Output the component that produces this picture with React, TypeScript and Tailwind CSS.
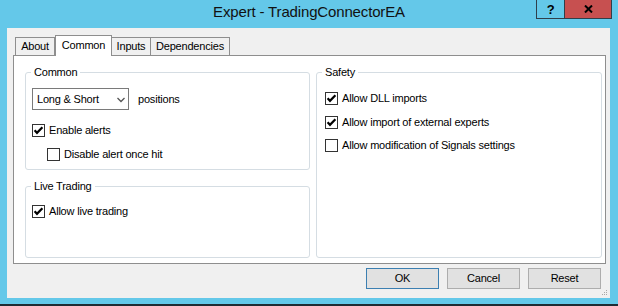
import React from "react";

const CheckBox = ({ checked }: { checked?: boolean }) => (
  <svg width="13" height="13" viewBox="0 0 13 13" className="shrink-0">
    <rect x="0.5" y="0.5" width="12" height="12" fill="#fff" stroke="#333" />
    {checked && (
      <path d="M2.6 6.2 L5 8.8 L10.4 3.2" fill="none" stroke="#000" strokeWidth="2.2" />
    )}
  </svg>
);

const CheckRow = ({ label, checked, className = "" }: { label: string; checked?: boolean; className?: string }) => (
  <div className={`flex items-center gap-[4px] h-[13px] leading-[13px] ${className}`}>
    <CheckBox checked={checked} />
    <span>{label}</span>
  </div>
);

const GroupBox = ({ title, className = "", children }: { title: string; className?: string; children?: React.ReactNode }) => (
  <div className={`relative border border-[#d5dde3] rounded-[3px] ${className}`}>
    <span className="absolute -top-[7px] left-[5px] px-[3px] bg-white leading-[13px]">{title}</span>
    {children}
  </div>
);

const Button = ({ label, primary }: { label: string; primary?: boolean }) => (
  <div
    className={`w-[73px] h-[21px] flex items-center justify-center bg-[#e1e1e1] border ${
      primary ? "border-[#3c7fb1]" : "border-[#adadad]"
    }`}
  >
    {label}
  </div>
);

const tabs = [
  { name: "About", w: "w-[40px]" },
  { name: "Common", w: "w-[57px]", active: true },
  { name: "Inputs", w: "w-[40px]" },
  { name: "Dependencies", w: "w-[80px]" },
];

export default function App() {
  return (
    <div className="relative w-[618px] h-[306px] bg-[#64c8e9] flex flex-col font-['Liberation_Sans',Arial,sans-serif] text-[11px] tracking-[-0.2px] text-black overflow-hidden">
      {/* title bar */}
      <div className="h-[28px] shrink-0">
        <div className="h-[24px] leading-[24px] text-center text-[15px] tracking-[-0.15px] text-[#111]">
          Expert - TradingConnectorEA
        </div>
      </div>
      <div className="absolute top-0 right-[6px] flex h-[19px] border border-t-0 border-[#2f3f4b]">
        <div className="w-[27px] flex items-center justify-center font-bold text-[13px] leading-none">?</div>
        <div className="w-[47px] bg-[#c75050] border-l border-[#2f3f4b] flex items-center justify-center">
          <svg width="9" height="8" viewBox="0 0 9 8">
            <path d="M1 0.5 L8 7.5 M8 0.5 L1 7.5" stroke="#000" strokeWidth="2" />
          </svg>
        </div>
      </div>

      {/* client area */}
      <div className="relative ml-[7px] mr-[8px] h-[270px] shrink-0 bg-[#f0f0f0] flex flex-col">
        <div className="pt-[7px] pl-[6px]">
          <div className="flex items-end h-[20px] pl-[2px]">
            {tabs.map((t) =>
              t.active ? (
                <div
                  key={t.name}
                  className={`${t.w} h-[21px] -mb-px relative z-10 bg-white border border-b-0 border-[#8e8e8e] flex items-start justify-center pt-[3px] leading-[13px]`}
                >
                  {t.name}
                </div>
              ) : (
                <div
                  key={t.name}
                  className={`${t.w} h-[18px] bg-[#f0f0f0] border border-b-0 border-[#8e8e8e] -ml-px first:ml-0 flex items-center justify-center leading-[13px]`}
                >
                  {t.name}
                </div>
              )
            )}
          </div>
          <div className="w-[593px] h-[209px] bg-white border border-[#8e8e8e] pl-[11px] pr-[3px] pt-[16px] flex gap-[6px]">
            <div className="w-[285px] flex flex-col gap-[16px]">
              <GroupBox title="Common" className="h-[98px] pl-[6px] pt-[15px]">
                <div className="flex items-center">
                  <div className="w-[97px] h-[22px] border border-[#7a7a7a] bg-white flex items-center justify-between pl-[4px] pr-[3px]">
                    <span>Long &amp; Short</span>
                    <svg width="8" height="6" viewBox="0 0 8 6" className="mt-[2px]">
                      <path d="M0.5 1 L4 4.5 L7.5 1" fill="none" stroke="#555" strokeWidth="1.3" />
                    </svg>
                  </div>
                  <span className="ml-[9px]">positions</span>
                </div>
                <CheckRow label="Enable alerts" checked className="mt-[14px]" />
                <CheckRow label="Disable alert once hit" className="mt-[11px] ml-[15px]" />
              </GroupBox>
              <GroupBox title="Live Trading" className="h-[72px] pl-[6px] pt-[18px]">
                <CheckRow label="Allow live trading" checked />
              </GroupBox>
            </div>
            <GroupBox title="Safety" className="w-[286px] h-[186px] pl-[8px] pt-[19px]">
              <CheckRow label="Allow DLL imports" checked />
              <CheckRow label="Allow import of external experts" checked className="mt-[11px]" />
              <CheckRow label="Allow modification of Signals settings" className="mt-[10px]" />
            </GroupBox>
          </div>
        </div>

        <div className="mt-[4px] pr-[9px] flex justify-end gap-[8px]">
          <Button label="OK" primary />
          <Button label="Cancel" />
          <Button label="Reset" />
        </div>

        <svg width="6" height="6" viewBox="0 0 6 6" className="absolute right-[3px] bottom-[3px]">
          <rect x="5" y="1" width="1" height="1" fill="#a8a8a8" />
          <rect x="3" y="3" width="1" height="1" fill="#a8a8a8" />
          <rect x="5" y="3" width="1" height="1" fill="#a8a8a8" />
          <rect x="1" y="5" width="1" height="1" fill="#a8a8a8" />
          <rect x="3" y="5" width="1" height="1" fill="#a8a8a8" />
          <rect x="5" y="5" width="1" height="1" fill="#a8a8a8" />
        </svg>
      </div>

      <div className="h-[6px] shrink-0" />
      <div className="flex-1 bg-[#1f2b33]" />
    </div>
  );
}
